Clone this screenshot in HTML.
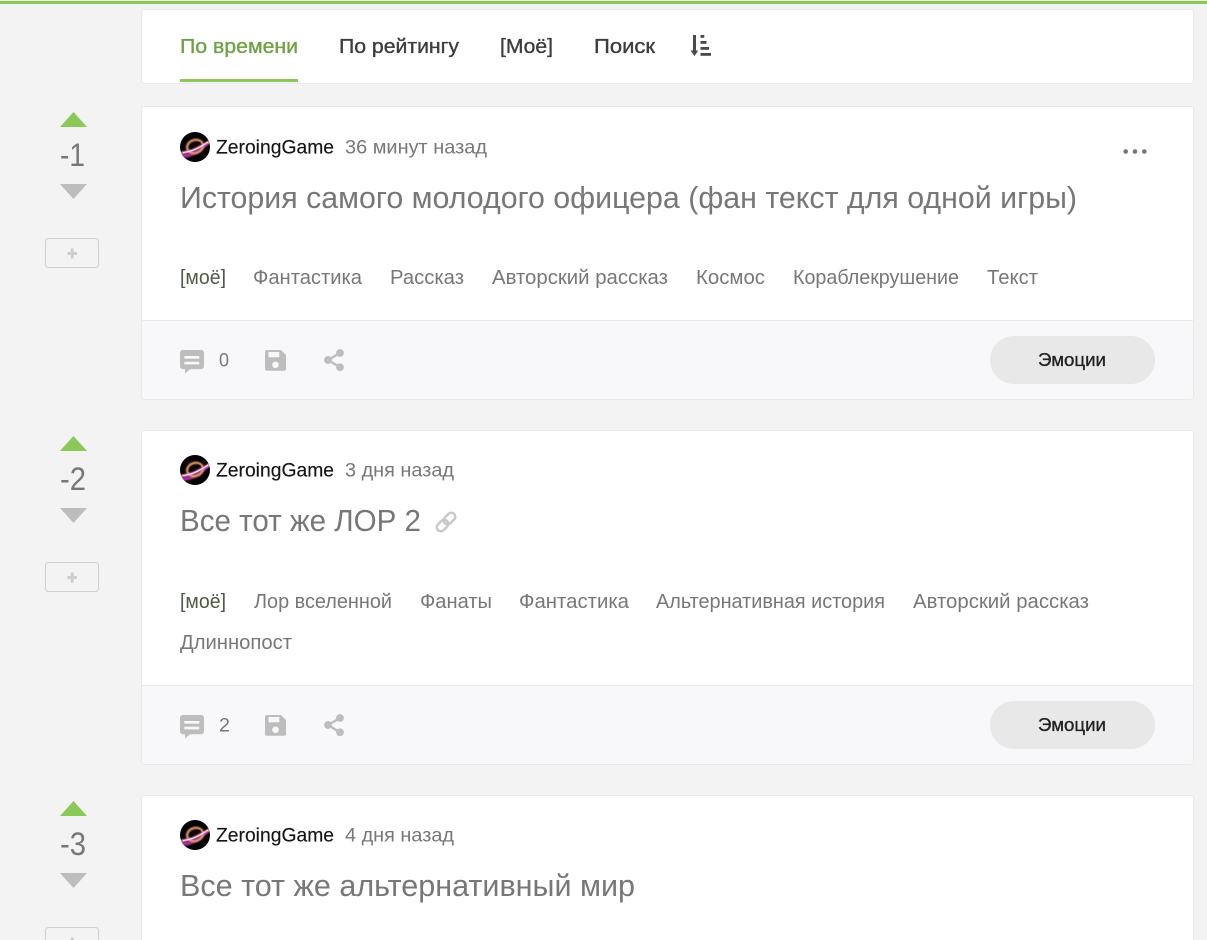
<!DOCTYPE html>
<html lang="ru">
<head>
<meta charset="utf-8">
<title>ZeroingGame</title>
<style>
html,body{margin:0;padding:0;width:1207px;height:940px;overflow:hidden;background:#f3f3f3}
svg{display:block;position:absolute;left:0;top:0}
text{font-family:"Liberation Sans",Arial,sans-serif;white-space:pre}
.nav{font-size:20px;fill:#3c3c3c;stroke:#3c3c3c;stroke-width:.35px}
.navA{fill:#6da144;stroke:#6da144}
.au{font-size:19.5px;fill:#151515;stroke:#151515;stroke-width:.15px}
.tm{font-size:19.5px;fill:#777}
.ti{font-size:30.5px;fill:#777}
.tg{font-size:20px;fill:#777}
.my{fill:#4f5a45}
.sc{font-size:32px;fill:#777}
.ct{font-size:19.5px;fill:#777}
.em{font-size:18.5px;fill:#222;stroke:#222;stroke-width:.35px}
.card{fill:#fff;stroke:#e9e9e9;stroke-width:1}
.foot{fill:#f8f8fa}
.ic{fill:#bdbdbd}
</style>
</head>
<body>
<svg width="1207" height="940" viewBox="0 0 1207 940" xmlns="http://www.w3.org/2000/svg">
<defs>
<filter id="soft" x="-30%" y="-30%" width="160%" height="160%"><feGaussianBlur stdDeviation="0.9"/></filter>
<clipPath id="avc"><circle cx="15" cy="15" r="15"/></clipPath>
<g id="avatar">
<circle cx="15" cy="15" r="15" fill="#050305"/>
<g clip-path="url(#avc)">
<path d="M0 22 Q8 23 16 19 T30 8 L30 11 Q24 17 16 22 T0 25Z" fill="#a8329a" filter="url(#soft)"/>
<ellipse cx="15" cy="14.500" rx="8" ry="6.500" transform="rotate(-18 15 14.500)" fill="none" stroke="#f2a268" stroke-width="2.200" filter="url(#soft)"/>
<ellipse cx="16" cy="12.500" rx="5" ry="2.600" transform="rotate(-15 16 12.500)" fill="#120808"/>
<path d="M1 21 Q10 20 17 16.500 T30 9" fill="none" stroke="#ff8fd2" stroke-width="2.400" filter="url(#soft)"/>
<path d="M3 20.500 Q11 19.500 17 16.500 T28 10" fill="none" stroke="#ffe6f4" stroke-width="1"/>
</g>
</g>
<g id="vote">
<path d="M73.500 112 L87 127 H60Z" fill="#8ac858"/>
<path d="M60 184 H87 L73.500 199Z" fill="#bdbdbd"/>
<rect x="45.500" y="238.500" width="53" height="29" rx="3" fill="#f3f3f3" stroke="#cfcfcf"/>
<path d="M67.500 252h3.200v-3.500h3v3.500h3.300v3h-3.300v3.500h-3V255h-3.200z" fill="#cdcdcd"/>
</g>
<g id="foot">
<path class="ic" d="M183 350H201a3 3 0 0 1 3 3V366.300a3 3 0 0 1-3 3H190L185 373.500V369.300H183a3 3 0 0 1-3-3V353a3 3 0 0 1 3-3Z"/>
<rect x="184.300" y="356" width="15" height="2.700" fill="#f8f8fa"/>
<rect x="184.300" y="361.700" width="15" height="2.700" fill="#f8f8fa"/>
<path class="ic" fill-rule="evenodd" d="M267 350H281L286 355V368.700a2 2 0 0 1-2 2H267a2 2 0 0 1-2-2V352a2 2 0 0 1 2-2ZM268.500 352V357.300H279.300V352ZM275.500 361.500a3.300 3.300 0 1 0 .01 0Z"/>
<g fill="#bdbdbd" stroke="none">
<circle cx="340" cy="353" r="3.900"/><circle cx="328" cy="360" r="3.900"/><circle cx="340" cy="367.300" r="3.900"/>
</g>
<path d="M340 353 328 360 340 367.300" fill="none" stroke="#bdbdbd" stroke-width="2.400"/>
<rect x="990" y="336" width="165" height="48" rx="24" fill="#e8e8e8"/>
</g>
</defs>

<rect x="0" y="1" width="1207" height="3" fill="#8ac858"/>

<!-- nav -->
<rect class="card" x="141.500" y="9.500" width="1052" height="74" rx="3"/>
<text class="nav navA" x="180" y="53" textLength="118" lengthAdjust="spacingAndGlyphs">По времени</text>
<rect x="180" y="79" width="118" height="3" fill="#8ac858"/>
<text class="nav" x="339" y="53" textLength="120" lengthAdjust="spacingAndGlyphs">По рейтингу</text>
<text class="nav" x="500" y="53" textLength="53" lengthAdjust="spacingAndGlyphs">[Моё]</text>
<text class="nav" x="594" y="53" textLength="61" lengthAdjust="spacingAndGlyphs">Поиск</text>
<path d="M693 35h3v15.500h2.300L694.500 56 690.500 50.500H693Z" fill="#4a4a4a"/>
<rect x="700.500" y="35" width="3.800" height="2.800" fill="#4a4a4a"/>
<rect x="700.500" y="41" width="6" height="2.800" fill="#4a4a4a"/>
<rect x="700.500" y="47" width="8.500" height="2.800" fill="#4a4a4a"/>
<rect x="700.500" y="53" width="10.500" height="2.800" fill="#4a4a4a"/>

<!-- post 1 -->
<use href="#vote"/>
<text class="sc" x="60" y="166" textLength="25" lengthAdjust="spacingAndGlyphs">-1</text>
<rect class="card" x="141.500" y="106.500" width="1052" height="293" rx="3"/>
<use href="#avatar" x="180" y="132"/>
<text class="au" x="216" y="153.500" textLength="118" lengthAdjust="spacingAndGlyphs">ZeroingGame</text>
<text class="tm" x="345" y="153.500" textLength="142" lengthAdjust="spacingAndGlyphs">36 минут назад</text>
<circle cx="1125.700" cy="151.500" r="2.300" fill="#757575"/><circle cx="1135" cy="151.500" r="2.300" fill="#757575"/><circle cx="1144.300" cy="151.500" r="2.300" fill="#757575"/>
<text class="ti" x="180" y="208" textLength="897" lengthAdjust="spacingAndGlyphs">История самого молодого офицера (фан текст для одной игры)</text>
<text class="tg my" x="180" y="284" textLength="46" lengthAdjust="spacingAndGlyphs">[моё]</text>
<text class="tg" x="253" y="284" textLength="109" lengthAdjust="spacingAndGlyphs">Фантастика</text>
<text class="tg" x="390" y="284" textLength="74" lengthAdjust="spacingAndGlyphs">Рассказ</text>
<text class="tg" x="492" y="284" textLength="176" lengthAdjust="spacingAndGlyphs">Авторский рассказ</text>
<text class="tg" x="696" y="284" textLength="69" lengthAdjust="spacingAndGlyphs">Космос</text>
<text class="tg" x="793" y="284" textLength="166" lengthAdjust="spacingAndGlyphs">Кораблекрушение</text>
<text class="tg" x="987" y="284" textLength="51" lengthAdjust="spacingAndGlyphs">Текст</text>
<path class="foot" d="M142 320.500H1193V396a3 3 0 0 1-3 3H145a3 3 0 0 1-3-3Z"/>
<path d="M142 320.500H1193" stroke="#e9e9e9"/>
<use href="#foot"/>
<text class="ct" x="219" y="366.500" textLength="10" lengthAdjust="spacingAndGlyphs">0</text>
<text class="em" x="1038" y="366" textLength="68" lengthAdjust="spacingAndGlyphs">Эмоции</text>

<!-- post 2 -->
<use href="#vote" y="324"/>
<text class="sc" x="60" y="490" textLength="26" lengthAdjust="spacingAndGlyphs">-2</text>
<rect class="card" x="141.500" y="430.500" width="1052" height="334" rx="3"/>
<use href="#avatar" x="180" y="455"/>
<text class="au" x="216" y="476.500" textLength="118" lengthAdjust="spacingAndGlyphs">ZeroingGame</text>
<text class="tm" x="345" y="476.500" textLength="109" lengthAdjust="spacingAndGlyphs">3 дня назад</text>
<text class="ti" x="180" y="531" textLength="241" lengthAdjust="spacingAndGlyphs">Все тот же ЛОР 2</text>
<g fill="none" stroke="#c9c9c9" stroke-width="2.500" transform="rotate(-45 446 522)">
<rect x="434.500" y="518" width="13" height="8" rx="4"/>
<rect x="444.500" y="518" width="13" height="8" rx="4"/>
</g>
<text class="tg my" x="180" y="608" textLength="46" lengthAdjust="spacingAndGlyphs">[моё]</text>
<text class="tg" x="254" y="608" textLength="138" lengthAdjust="spacingAndGlyphs">Лор вселенной</text>
<text class="tg" x="420" y="608" textLength="72" lengthAdjust="spacingAndGlyphs">Фанаты</text>
<text class="tg" x="519" y="608" textLength="110" lengthAdjust="spacingAndGlyphs">Фантастика</text>
<text class="tg" x="656" y="608" textLength="229" lengthAdjust="spacingAndGlyphs">Альтернативная история</text>
<text class="tg" x="913" y="608" textLength="176" lengthAdjust="spacingAndGlyphs">Авторский рассказ</text>
<text class="tg" x="180" y="649" textLength="112" lengthAdjust="spacingAndGlyphs">Длиннопост</text>
<path class="foot" d="M142 685.500H1193V761a3 3 0 0 1-3 3H145a3 3 0 0 1-3-3Z"/>
<path d="M142 685.500H1193" stroke="#e9e9e9"/>
<use href="#foot" y="365"/>
<text class="ct" x="219" y="731.500" textLength="11" lengthAdjust="spacingAndGlyphs">2</text>
<text class="em" x="1038" y="731" textLength="68" lengthAdjust="spacingAndGlyphs">Эмоции</text>

<!-- post 3 -->
<use href="#vote" y="689"/>
<text class="sc" x="60" y="855" textLength="26" lengthAdjust="spacingAndGlyphs">-3</text>
<rect class="card" x="141.500" y="795.500" width="1052" height="300" rx="3"/>
<use href="#avatar" x="180" y="820"/>
<text class="au" x="216" y="841.500" textLength="118" lengthAdjust="spacingAndGlyphs">ZeroingGame</text>
<text class="tm" x="345" y="841.500" textLength="109" lengthAdjust="spacingAndGlyphs">4 дня назад</text>
<text class="ti" x="180" y="896" textLength="455" lengthAdjust="spacingAndGlyphs">Все тот же альтернативный мир</text>
</svg>
</body>
</html>
